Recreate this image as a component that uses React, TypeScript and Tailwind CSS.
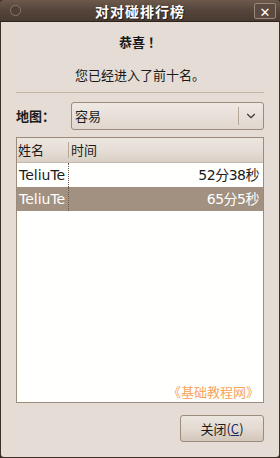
import { ChevronDown } from 'lucide-react';

const font = { fontFamily: '"Noto Sans CJK SC", "DejaVu Sans", sans-serif' };

interface Score {
  name: string;
  time: string;
  selected?: boolean;
}

const scores: Score[] = [
  { name: 'TeliuTe', time: '52分38秒' },
  { name: 'TeliuTe', time: '65分5秒', selected: true },
];

export default function App() {
  return (
    <div className="w-[280px] h-[458px] flex flex-col bg-[#3c3028] text-[13px] text-[#1a1a1a]" style={font}>
      {/* Title bar */}
      <div className="h-[22px] shrink-0 relative flex items-center justify-center rounded-t-[4px] bg-gradient-to-b from-[#6e5a4c] via-[#54443a] to-[#4a3b32] border-b border-[#2e241e]">
        <div className="absolute left-[10px] top-[5px] w-[11px] h-[11px] rounded-full border border-[#8a786a] bg-[#4e3f35]" />
        <span className="text-white font-bold text-[14px] leading-none tracking-[1px]" style={{ textShadow: '1px 1px 0 #2a201a' }}>
          对对碰排行榜
        </span>
        <div className="absolute right-[4px] top-[3px] w-[22px] h-[16px] border border-[#9a8878] rounded-[2px] flex items-center justify-center bg-[#5a4a3f]">
          <span className="text-white font-bold text-[13px] leading-none">✕</span>
        </div>
      </div>

      {/* Body */}
      <div className="flex-1 flex flex-col bg-[#e5ddd5] mx-[1px] mb-[1px] rounded-b-[3px] px-[15px]">
        <div className="text-center font-bold text-[13px] mt-[11px] leading-[18px]">
          恭喜<span className="ml-[3px]">！</span>
        </div>
        <div className="text-center mt-[15px] leading-[18px]">您已经进入了前十名。</div>
        <div className="h-[1px] bg-[#c3b3a5] mt-[8px]" />

        <div className="flex items-center mt-[9px] h-[28px]">
          <span className="font-bold w-[55px]">地图：</span>
          <div className="flex-1 h-[28px] border border-[#9c8c7c] rounded-[3px] bg-gradient-to-b from-[#efe9e3] to-[#e0d7ce] flex items-center pl-[3px]">
            <span className="flex-1">容易</span>
            <div className="w-[1px] h-[18px] bg-[#b5a596]" />
            <div className="w-[24px] flex justify-center">
              <ChevronDown size={14} strokeWidth={2} className="text-[#3a3a3a]" />
            </div>
          </div>
        </div>

        {/* Table */}
        <div className="mt-[7px] h-[266px] border border-[#9c8c7c] bg-[#fffffd] flex flex-col">
          <div className="h-[25px] flex items-center bg-gradient-to-b from-[#ece6e0] via-[#e6ded6] to-[#d9cfc5] border-b border-[#c6b9ac]">
            <div className="w-[51px] pl-[1px]">姓名</div>
            <div className="w-[1px] h-[16px] bg-[#b8a898]" />
            <div className="pl-[2px]">时间</div>
          </div>
          {scores.map((s, i) => (
            <div
              key={i}
              className={`h-[24px] flex items-center ${s.selected ? 'bg-[#a29180] text-white' : 'text-[#1a1a1a]'}`}
              style={{ fontFamily: '"DejaVu Sans", "Noto Sans CJK SC", sans-serif' }}
            >
              <div className="w-[51px] pl-[2px] text-[14px]">{s.name}</div>
              <div className="w-[0px] h-full border-l border-dotted border-[#6a5a4c]" />
              <div className="flex-1 text-right pr-[4px] text-[14px] tracking-[-0.5px]">{s.time}</div>
            </div>
          ))}
          <div className="flex-1 flex items-end justify-end pr-[4px] pb-[1px]">
            <span className="text-[#f7a45a] text-[13px] leading-[18px]">《基础教程网》</span>
          </div>
        </div>

        <div className="flex justify-end mt-[12px]">
          <button className="w-[84px] h-[27px] border border-[#9c8c7c] rounded-[3px] bg-gradient-to-b from-[#ece6df] via-[#e3dad1] to-[#d3c6ba] flex items-center justify-center">
            关闭(<span className="underline text-[#1a2a6a]">C</span>)
          </button>
        </div>
      </div>
    </div>
  );
}
